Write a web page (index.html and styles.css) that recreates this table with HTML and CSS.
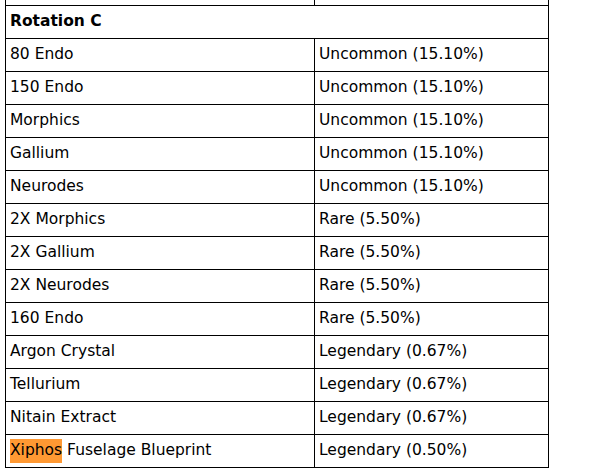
FILE: index.html
```html
<!DOCTYPE html>
<html>
<head>
<meta charset="utf-8">
<link rel="stylesheet" href="styles.css">
</head>
<body>
<div class="viewport">
<table class="drops">
  <colgroup><col class="c1"><col class="c2"></colgroup>
  <tr class="prev"><td></td><td></td></tr>
  <tr><th colspan="2">Rotation C</th></tr>
  <tr><td>80 Endo</td><td>Uncommon (15.10%)</td></tr>
  <tr><td>150 Endo</td><td>Uncommon (15.10%)</td></tr>
  <tr><td>Morphics</td><td>Uncommon (15.10%)</td></tr>
  <tr><td>Gallium</td><td>Uncommon (15.10%)</td></tr>
  <tr><td>Neurodes</td><td>Uncommon (15.10%)</td></tr>
  <tr><td>2X Morphics</td><td>Rare (5.50%)</td></tr>
  <tr><td>2X Gallium</td><td>Rare (5.50%)</td></tr>
  <tr><td>2X Neurodes</td><td>Rare (5.50%)</td></tr>
  <tr><td>160 Endo</td><td>Rare (5.50%)</td></tr>
  <tr><td>Argon Crystal</td><td>Legendary (0.67%)</td></tr>
  <tr><td>Tellurium</td><td>Legendary (0.67%)</td></tr>
  <tr><td>Nitain Extract</td><td>Legendary (0.67%)</td></tr>
  <tr><td><span class="hl">Xiphos</span> Fuselage Blueprint</td><td>Legendary (0.50%)</td></tr>
</table>
</div>
</body>
</html>
```
FILE: styles.css
```css
html, body {
  margin: 0;
  padding: 0;
  background: #fff;
}
.viewport {
  width: 613px;
  height: 476px;
  overflow: hidden;
}
.drops {
  border-collapse: collapse;
  table-layout: fixed;
  width: 543px;
  margin: -28px 0 0 5px;
  font-family: "DejaVu Sans", Verdana, sans-serif;
  font-size: 15.5px;
  color: #000;
}
.c1 { width: 309px; }
.c2 { width: 234px; }
.drops td, .drops th {
  border: 1px solid #000;
  height: 30px;
  padding: 0 4px 2px;
  text-align: left;
  vertical-align: middle;
  font-weight: normal;
  white-space: nowrap;
}
.drops th {
  font-weight: bold;
}
.hl {
  background: #ff9933;
  padding: 2px 0 4px;
}
```
